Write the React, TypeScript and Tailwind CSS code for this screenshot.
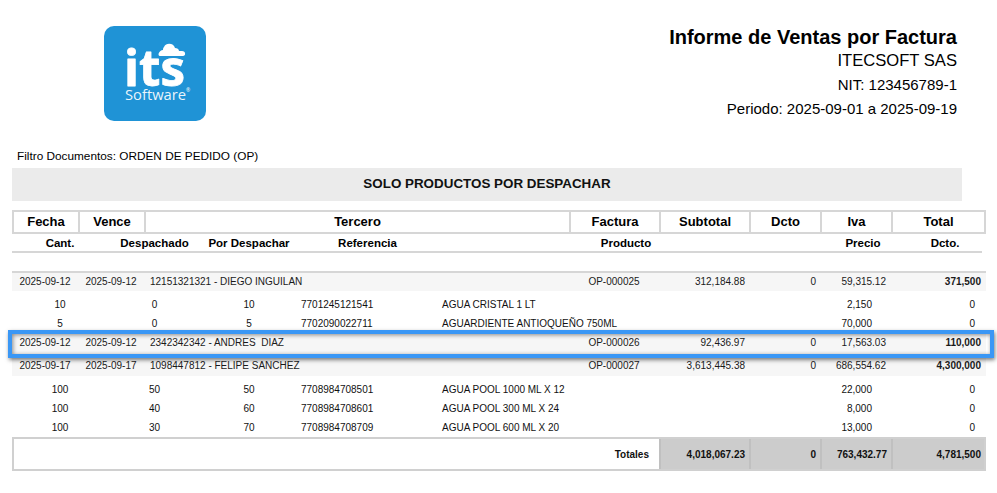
const cols = "grid grid-cols-[64px_66px_425px_90px_90px_71px_71px_93px]";
const groupCols = "grid grid-cols-[66px_66px_425px_90px_90px_71px_71px_95px]";
const detailCols = "grid grid-cols-[96px_93px_96px_141px_376px_98px_70px]";

function Logo() {
  return (
    <svg width="103" height="96" viewBox="0 0 103 96" className="block">
      <rect x="0" y="0" width="102" height="95" rx="10" fill="#1f93d6" />
      <text x="20" y="60" fontFamily="'Open Sans', sans-serif" fontWeight="700" fontSize="50" fill="#fff" stroke="#fff" strokeWidth="0.8" strokeLinejoin="round" textLength="61" lengthAdjust="spacingAndGlyphs">its</text>
      <path d="M56 30h23c3 0 3-5-1-5h-3c0-2-2-3-4-3-1-5-9-6-11-1-1 1-1 2-1 3-4 0-6 6-3 6z" fill="#fff" />
      <text x="21" y="74" fontFamily="'Open Sans', sans-serif" fontSize="15" fill="#fff" fillOpacity="0.92" textLength="61" lengthAdjust="spacingAndGlyphs">Software</text>
      <text x="82" y="66" fontFamily="'Open Sans', sans-serif" fontSize="5" fill="#fff">®</text>
    </svg>
  );
}

function HeaderRow() {
  const items = ["Fecha", "Vence", "Tercero", "Factura", "Subtotal", "Dcto", "Iva", "Total"];
  return (
    <div className={`${cols} h-[24px] border-2 border-[#d6d6d6] box-border`}>
      {items.map((t, i) => (
        <div key={t} className={`flex items-center justify-center text-[13px] font-bold text-black ${i > 0 ? "border-l-2 border-[#d6d6d6]" : ""}`}>{t}</div>
      ))}
    </div>
  );
}

function SubHeader() {
  const items = ["Cant.", "Despachado", "Por Despachar", "Referencia", "Producto", "Precio", "Dcto."];
  return (
    <div className={`${detailCols} h-[19px] border-b-2 border-[#d6d6d6] w-[970px]`}>
      {items.map((t, i) => (
        <div key={t} className={`flex items-center justify-center pt-[1px] text-[11.5px] font-bold text-black ${i === 6 ? "pr-[4px]" : ""}`}>{t}</div>
      ))}
    </div>
  );
}

function GroupRow({ r, className = "" }: { r: string[]; className?: string }) {
  return (
    <div className={`${groupCols} bg-[#f6f6f6] text-[10px] text-[#1a1a1a] items-center ${className}`}>
      <div className="text-center">{r[0]}</div>
      <div className="text-center">{r[1]}</div>
      <div className="pl-[6px] whitespace-pre">{r[2]}</div>
      <div className="text-center">{r[3]}</div>
      <div className="text-right pr-[4px]">{r[4]}</div>
      <div className="text-right pr-[4px]">{r[5]}</div>
      <div className="text-right pr-[5px]">{r[6]}</div>
      <div className="text-right pr-[5px] font-bold">{r[7]}</div>
    </div>
  );
}

function DetailRow({ r }: { r: string[] }) {
  return (
    <div className={`${detailCols} h-[19px] items-center text-[10px] text-[#111]`}>
      <div className="text-center">{r[0]}</div>
      <div className="text-center">{r[1]}</div>
      <div className="text-center">{r[2]}</div>
      <div className="pl-[4px]">{r[3]}</div>
      <div className="pl-[4px]">{r[4]}</div>
      <div className="text-right pr-[40px]">{r[5]}</div>
      <div className="text-right pr-[7px]">{r[6]}</div>
    </div>
  );
}

function Totals() {
  const vals = ["4,018,067.23", "0", "763,432.77", "4,781,500"];
  return (
    <div className="grid grid-cols-[645px_90px_71px_71px_93px] h-[34px] border-2 border-[#d0d0d0] box-border text-[10px] font-bold text-[#111]">
      <div className="flex items-center justify-end pr-[10px]">Totales</div>
      {vals.map((v, i) => (
        <div key={v} className={`flex items-center justify-end bg-[#cccccc] border-l-2 border-[#c0c0c0] ${i === 3 ? "pr-[3px]" : "pr-[4px]"}`}>{v}</div>
      ))}
    </div>
  );
}

export default function App() {
  return (
    <div className="w-[997px] h-[493px] bg-white overflow-hidden relative font-['Liberation_Sans',Arial,sans-serif]">
      <div className="flex justify-between h-[146px]">
        <div className="pl-[104px] pt-[26px]"><Logo /></div>
        <div className="pr-[40px] pt-[25px] text-right text-black text-[16px] leading-[24px]">
          <div className="text-[20px] font-bold">Informe de Ventas por Factura</div>
          <div className="text-[16.6px]">ITECSOFT SAS</div>
          <div className="text-[15px]">NIT: 123456789-1</div>
          <div className="text-[15px]">Periodo: 2025-09-01 a 2025-09-19</div>
        </div>
      </div>
      <div className="pl-[17px] h-[22px] flex items-center text-[11.8px] text-black">Filtro Documentos: ORDEN DE PEDIDO (OP)</div>
      <div className="ml-[12px] w-[950px] h-[33px] bg-[#ebebeb] flex items-center justify-center text-[13.4px] font-bold text-[#111]">SOLO PRODUCTOS POR DESPACHAR</div>
      <div className="ml-[12px] w-[974px] mt-[9px]">
        <HeaderRow />
        <SubHeader />
        <div className="mt-[18px]">
          <GroupRow className="h-[20px] border-t-2 border-[#d6d6d6] pb-[2px]" r={["2025-09-12", "2025-09-12", "12151321321 - DIEGO INGUILAN", "OP-000025", "312,184.88", "0", "59,315.12", "371,500"]} />
          <div className="mt-[4px]">
            <DetailRow r={["10", "0", "10", "7701245121541", "AGUA CRISTAL 1 LT", "2,150", "0"]} />
            <DetailRow r={["5", "0", "5", "7702090022711", "AGUARDIENTE ANTIOQUEÑO 750ML", "70,000", "0"]} />
          </div>
          <div className="relative">
            <GroupRow className="h-[21px] pb-[2px]" r={["2025-09-12", "2025-09-12", "2342342342 - ANDRES  DIAZ", "OP-000026", "92,436.97", "0", "17,563.03", "110,000"]} />
            <div className="absolute -left-[4px] -right-[8px] -top-[3px] -bottom-[4px] border-4 border-[#3a97f5] shadow-[1px_2px_4px_rgba(0,0,0,0.5),inset_1px_1px_4px_rgba(0,0,0,0.45)]" />
          </div>
          <GroupRow className="h-[22px]" r={["2025-09-17", "2025-09-17", "1098447812 - FELIPE SANCHEZ", "OP-000027", "3,613,445.38", "0", "686,554.62", "4,300,000"]} />
          <div className="mt-[4px]">
            <DetailRow r={["100", "50", "50", "7708984708501", "AGUA POOL 1000 ML X 12", "22,000", "0"]} />
            <DetailRow r={["100", "40", "60", "7708984708601", "AGUA POOL 300 ML X 24", "8,000", "0"]} />
            <DetailRow r={["100", "30", "70", "7708984708709", "AGUA POOL 600 ML X 20", "13,000", "0"]} />
          </div>
        </div>
        <Totals />
      </div>
    </div>
  );
}
